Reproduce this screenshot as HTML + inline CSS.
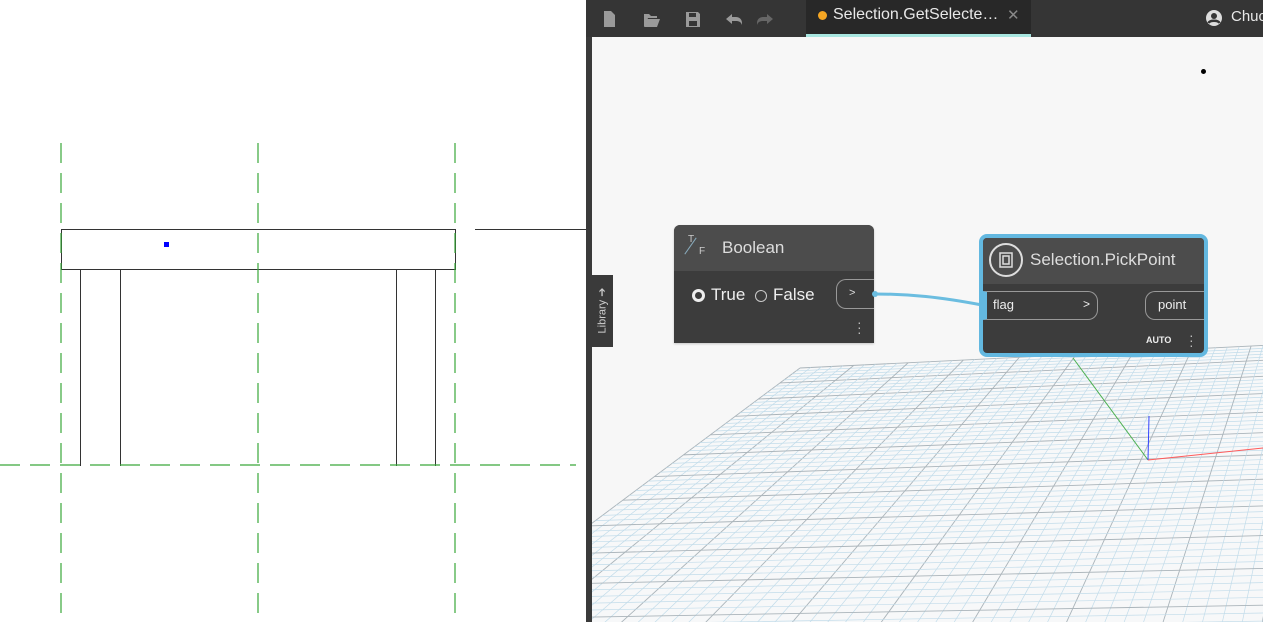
<!DOCTYPE html>
<html style="overflow:hidden"><head><meta charset="utf-8"><style>
*{margin:0;padding:0;box-sizing:border-box}
html,body{width:1263px;height:622px;overflow:hidden}
body{background:#fff;position:relative;font-family:"Liberation Sans",sans-serif}
.abs{position:absolute}
</style></head><body>
<svg class="abs" style="left:0;top:0" width="590" height="622">
<g stroke="#333" stroke-width="1" fill="none">
<rect x="61.5" y="229.5" width="394" height="40"/>
<line x1="80.5" y1="270" x2="80.5" y2="466"/><line x1="120.5" y1="270" x2="120.5" y2="466"/>
<line x1="396.5" y1="270" x2="396.5" y2="466"/><line x1="435.5" y1="270" x2="435.5" y2="466"/>
<line x1="475" y1="229.5" x2="588" y2="229.5"/>
</g>
<g stroke="#3aa83a" stroke-width="1.2" stroke-dasharray="20 10" fill="none">
<line x1="61" y1="143" x2="61" y2="622"/><line x1="258" y1="143" x2="258" y2="622"/><line x1="455" y1="143" x2="455" y2="622"/>
<line x1="0" y1="465" x2="576" y2="465"/>
</g>
<rect x="164" y="242" width="5" height="5" fill="#0000ff"/>
</svg>
<div class="abs" style="left:586px;top:0;width:677px;height:622px;background:#f7f7f7"></div>
<svg id="grid" class="abs" style="left:592px;top:37px" width="671" height="585"></svg>
<div class="abs" style="left:586px;top:0;width:6px;height:622px;background:#3a3a3a"></div>
<div class="abs" style="left:586px;top:0;width:677px;height:37px;background:#353535"></div>
<div class="abs" style="left:806px;top:0;width:225px;height:37px;background:#282828;border-bottom:3px solid #a8e6e0"></div>
<div class="abs" style="left:818px;top:11px;width:9px;height:9px;border-radius:50%;background:#f5a623"></div>
<div class="abs" style="left:833px;top:6px;color:#e8e8e8;font-size:16px">Selection.GetSelecte…</div>
<div class="abs" style="left:1007px;top:6px;color:#888;font-size:15px">✕</div>
<svg class="abs" style="left:600px;top:9px" width="180" height="20" fill="#9a9a9a">
<path d="M4 2h7l4 4v12H4z"/>
<path d="M44 5h5l2 2h6v2H48l-3 8h-1z M47 10h13l-3 8H44z"/>
<path d="M86 3h12l2 2v13H86z" /><rect x="89" y="4" width="7" height="4" fill="#353535"/><rect x="89" y="12" width="8" height="5" fill="#353535"/>
<path d="M126 10l6-5v3h4c3 0 6 2 6 6v2c-1-3-3-4-6-4h-4v3z"/>
<path d="M181 10l-6-5v3h-4c-3 0-6 2-6 6v2c1-3 3-4 6-4h4v3z" fill="#666" transform="translate(-8 0)"/>
</svg>
<svg class="abs" style="left:1205px;top:9px" width="18" height="18"><circle cx="9" cy="9" r="8" fill="#ddd"/><circle cx="9" cy="7" r="3" fill="#353535"/><path d="M3.5 14c1.5-3 9.5-3 11 0" stroke="#353535" stroke-width="2.5" fill="none"/></svg>
<div class="abs" style="left:1231px;top:8px;color:#e8e8e8;font-size:15px">Chuc</div>
<div class="abs" style="left:1201px;top:69px;width:5px;height:5px;border-radius:50%;background:#000"></div>
<div class="abs" style="left:592px;top:275px;width:21px;height:72px;background:#3a3a3a;overflow:hidden">
<div class="abs" style="left:-19px;top:29px;width:58px;transform:rotate(-90deg);color:#ccc;font-size:11px;white-space:nowrap;text-align:center">Library ➔</div></div>
<!-- Boolean node -->
<div class="abs" style="left:674px;top:225px;width:200px;height:118px;background:#3c3c3c;border-radius:6px 6px 0 0;box-shadow:0 1px 2px rgba(0,0,0,.2)"></div>
<div class="abs" style="left:674px;top:225px;width:200px;height:46px;background:#4c4c4c;border-radius:6px 6px 0 0"></div>
<div class="abs" style="left:688px;top:234px;color:#ccc;font-size:10px">T</div>
<div class="abs" style="left:690px;top:236px;width:1px;height:20px;background:#8ab;transform:rotate(35deg)"></div>
<div class="abs" style="left:699px;top:246px;color:#ccc;font-size:10px">F</div>
<div class="abs" style="left:722px;top:238px;color:#ddd;font-size:17px">Boolean</div>
<div class="abs" style="left:692px;top:289px;width:13px;height:13px;border-radius:50%;border:3px solid #eee"></div>
<div class="abs" style="left:711px;top:285px;color:#eee;font-size:17px">True</div>
<div class="abs" style="left:755px;top:290px;width:12px;height:12px;border-radius:50%;border:1px solid #ccc"></div>
<div class="abs" style="left:773px;top:285px;color:#eee;font-size:17px">False</div>
<div class="abs" style="left:836px;top:279px;width:38px;height:30px;border:1px solid #999;border-right:none;border-radius:10px 0 0 10px"></div>
<div class="abs" style="left:849px;top:287px;color:#ddd;font-size:11px">&gt;</div>
<div class="abs" style="left:857px;top:320px;color:#bbb;font-size:14px;line-height:5px;width:4px">·<br>·<br>·</div>
<svg class="abs" style="left:870px;top:285px" width="115" height="30"><path d="M5 9 C40 9 70 12 112 20" stroke="#6bbde0" stroke-width="3" fill="none"/><circle cx="5" cy="9" r="3" fill="#6bbde0"/></svg>
<!-- PickPoint node -->
<div class="abs" style="left:979px;top:234px;width:229px;height:123px;background:#3c3c3c;border:4px solid #63b8e0;border-radius:8px"></div>
<div class="abs" style="left:983px;top:238px;width:221px;height:46px;background:#4c4c4c;border-radius:4px 4px 0 0"></div>
<div class="abs" style="left:989px;top:243px;width:34px;height:34px;border-radius:50%;border:2px solid #ddd"></div>
<svg class="abs" style="left:997px;top:251px" width="18" height="18" fill="none" stroke="#ddd" stroke-width="1.5"><rect x="3" y="2" width="12" height="14"/><path d="M6 5h6v8H6z"/></svg>
<div class="abs" style="left:1030px;top:250px;color:#ddd;font-size:17px">Selection.PickPoint</div>
<div class="abs" style="left:983px;top:291px;width:115px;height:29px;border:1px solid #999;border-left:4px solid #63b8e0;border-radius:0 10px 10px 0"></div>
<div class="abs" style="left:993px;top:297px;color:#eee;font-size:13px">flag</div>
<div class="abs" style="left:1083px;top:297px;color:#eee;font-size:12px">&gt;</div>
<div class="abs" style="left:1145px;top:291px;width:59px;height:29px;border:1px solid #999;border-right:none;border-radius:10px 0 0 10px"></div>
<div class="abs" style="left:1158px;top:297px;color:#eee;font-size:13px">point</div>
<div class="abs" style="left:1146px;top:335px;color:#eee;font-size:9px;font-weight:bold">AUTO</div>
<div class="abs" style="left:1189px;top:333px;color:#bbb;font-size:14px;line-height:5px;width:4px">·<br>·<br>·</div>
<script>
(function(){
var svg=document.getElementById('grid');var ox=592,oy=37;
function H(src,dst){var A=[],b=[];for(var i=0;i<4;i++){var x=src[i][0],y=src[i][1],u=dst[i][0],v=dst[i][1];A.push([x,y,1,0,0,0,-u*x,-u*y]);b.push(u);A.push([0,0,0,x,y,1,-v*x,-v*y]);b.push(v);}
var n=8;for(var c=0;c<n;c++){var p=c;for(var r=c+1;r<n;r++)if(Math.abs(A[r][c])>Math.abs(A[p][c]))p=r;var t=A[c];A[c]=A[p];A[p]=t;t=b[c];b[c]=b[p];b[p]=t;for(var r=0;r<n;r++)if(r!=c){var f=A[r][c]/A[c][c];for(var k=c;k<n;k++)A[r][k]-=f*A[c][k];b[r]-=f*b[c];}}
var h=[];for(var i=0;i<n;i++)h.push(b[i]/A[i][i]);h.push(1);return h;}
var h=H([[0,0],[1,0],[0,1],[1,1]],[[800,368],[1560,331],[355,700],[1720,690]]);
function P(x,y){var w=h[6]*x+h[7]*y+1;return [(h[0]*x+h[1]*y+h[2])/w-ox,(h[3]*x+h[4]*y+h[5])/w-oy];}
var s='<polygon points="'+[P(0,0),P(1,0),P(1,1),P(0,1)].map(function(p){return p.join(',')}).join(' ')+'" fill="#f7f8f9"/>';
var N=65;
for(var i=0;i<=N;i++){var t=i/N,maj=(i%5==0);var col=maj?'#aab4ba':'#c2dcea',sw=maj?0.9:0.7;
var a=P(t,0),b=P(t,1),c=P(0,t),d=P(1,t);
s+='<line x1="'+a[0]+'" y1="'+a[1]+'" x2="'+b[0]+'" y2="'+b[1]+'" stroke="'+col+'" stroke-width="'+sw+'"/>';
s+='<line x1="'+c[0]+'" y1="'+c[1]+'" x2="'+d[0]+'" y2="'+d[1]+'" stroke="'+col+'" stroke-width="'+sw+'"/>';}
s+='<line x1="'+(1148-ox)+'" y1="'+(460-oy)+'" x2="'+(1073-ox)+'" y2="'+(358-oy)+'" stroke="#4caf50" stroke-width="1"/>';
s+='<line x1="'+(1148-ox)+'" y1="'+(460-oy)+'" x2="'+(1263-ox)+'" y2="'+(448-oy)+'" stroke="#ff5a5a" stroke-width="1"/>';
s+='<line x1="'+(1148-ox)+'" y1="'+(460-oy)+'" x2="'+(1149-ox)+'" y2="'+(416-oy)+'" stroke="#3344ff" stroke-width="1"/>';
svg.innerHTML=s;})();
</script>
</body></html>
